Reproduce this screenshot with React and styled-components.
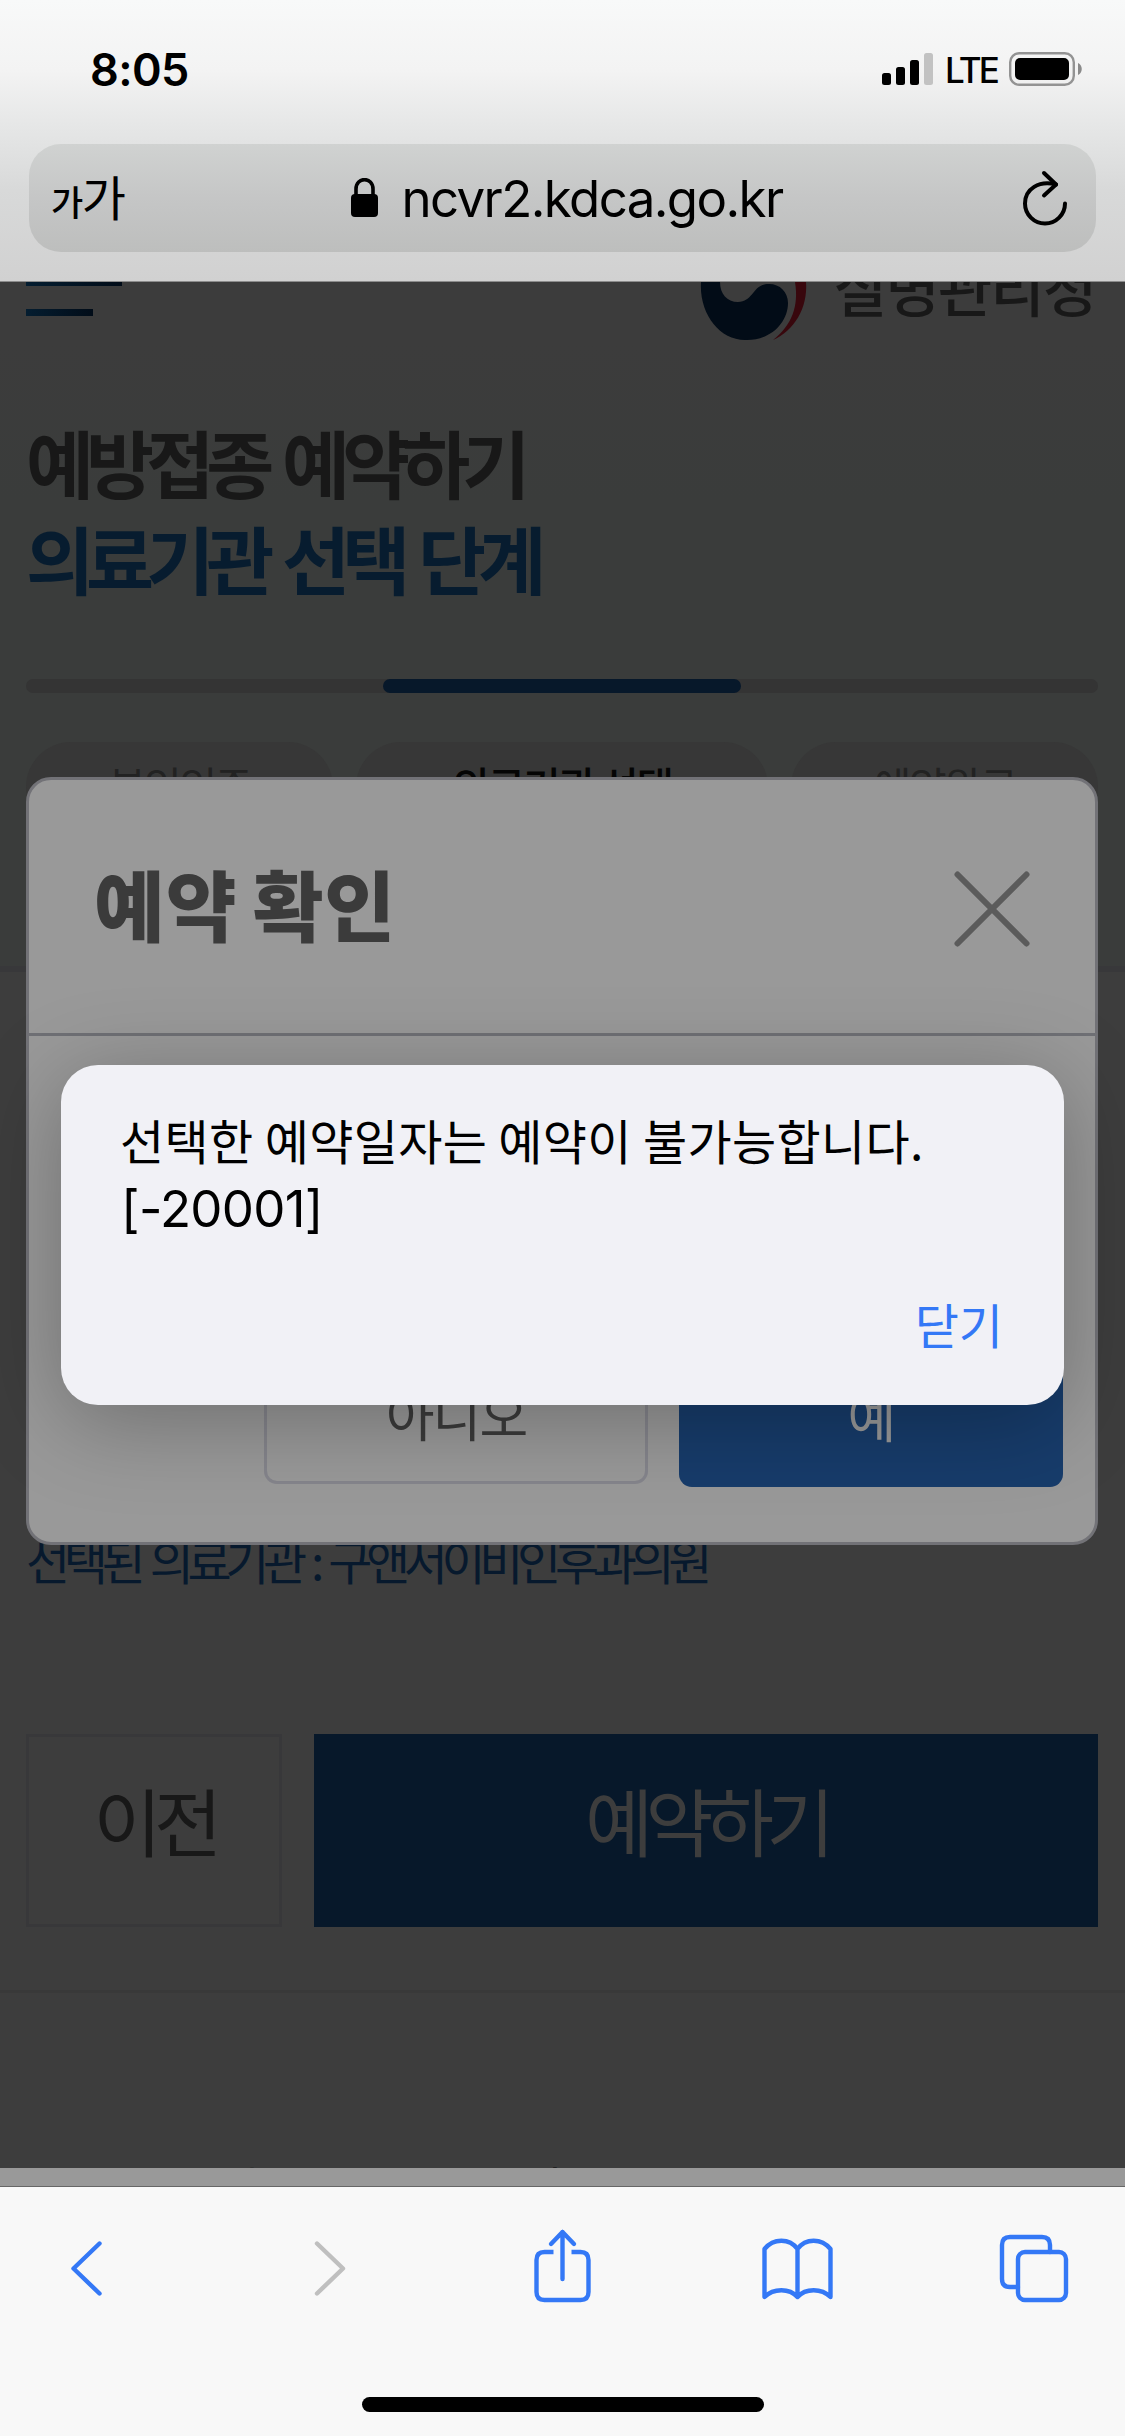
import React from 'react';
import styled, { createGlobalStyle } from 'styled-components';

const GlobalStyle = createGlobalStyle`
  * {
    box-sizing: border-box;
  }

  body {
    margin: 0;
    font-family: Inter, "Noto Sans CJK KR", sans-serif;
    white-space: nowrap;
  }

  button {
    font-family: inherit;
    border: none;
    padding: 0;
    background: none;
  }
`;

const Screen = styled.div`
  display: flex;
  flex-direction: column;
  width: 1125px;
  height: 2436px;
  overflow: hidden;
  background-color: #f8f8f8;
`;

const BrowserHeader = styled.header`
  height: 282px;
  flex-shrink: 0;
  border-bottom: 1px solid #8c8c8c;
  background: linear-gradient(#f8f9f9 0, #f3f3f3 70px, #e6e7e7 125px, #d8d9d9 190px, #d1d1d1 281px);
`;

const StatusBar = styled.div`
  display: flex;
  justify-content: space-between;
  height: 144px;
  padding: 43px 43px 0 90px;
`;

const Time = styled.div`
  font-size: 45px;
  font-weight: 600;
  line-height: 54px;
  letter-spacing: -0.6px;
`;

const StatusIcons = styled.div`
  display: flex;
  align-items: center;
  height: 52px;
`;

const Network = styled.div`
  width: 53px;
  margin: 2px 11px 0 12px;
  font-size: 35px;
  font-weight: 500;
  letter-spacing: -2.8px;
`;

const AddressBar = styled.div`
  display: flex;
  justify-content: space-between;
  align-items: center;
  height: 108px;
  margin: 0 29px;
  padding: 0 28px 0 22px;
  border-radius: 32px;
  background: linear-gradient(#d0d2d1, #c5c6c6 50%, #bdbebd);
`;

const TextSize = styled.div`
  width: 90px;
  font-family: "Noto Sans CJK KR", sans-serif;
  font-size: 48px;
  line-height: 60px;
  letter-spacing: -1.5px;

  small {
    font-size: 35px;
    font-weight: 500;
  }
`;

const Url = styled.div`
  display: flex;
  align-items: center;
  gap: 22px;
  margin-right: 29px;
  font-size: 51px;
  letter-spacing: -1.6px;
`;

const Page = styled.main`
  position: relative;
  height: 1886px;
  flex-shrink: 0;
  overflow: hidden;
  background-color: #3d3d3d;
  color: #181818;
  font-family: "Noto Sans CJK KR", sans-serif;
`;

const Intro = styled.section`
  height: 690px;
  padding: 0 27px 0 26px;
  border-bottom: 6px solid #38383a;
  background: linear-gradient(#3c3c3c 60px, #3a3c3b 220px);
`;

const SiteHeader = styled.div`
  display: flex;
  justify-content: space-between;
  height: 131px;
`;

const Menu = styled.div`
  display: flex;
  flex-direction: column;
  justify-content: space-between;
  height: 34px;
`;

const MenuBar = styled.span`
  width: ${props => props.width}px;
  height: ${props => props.height}px;
  background: linear-gradient(90deg, #041d30, #010c18);
`;

const Brand = styled.div`
  display: flex;
  gap: 23px;
`;

const BrandName = styled.div`
  width: 265px;
  margin-top: -35px;
  font-size: 59px;
  font-weight: 500;
  line-height: 80px;
  letter-spacing: -1.8px;
`;

const Title = styled.h1`
  margin: 0;
  font-size: 74px;
  font-weight: 700;
  line-height: 96px;
  letter-spacing: -8px;
  word-spacing: 7px;

  em {
    display: block;
    color: #071c2f;
    font-style: normal;
  }
`;

const Progress = styled.div`
  display: flex;
  justify-content: center;
  height: 14px;
  margin-top: 74px;
  border-radius: 7px;
  background-color: #343434;
`;

const ProgressValue = styled.div`
  width: 358px;
  border-radius: 7px;
  background-color: #07182a;
`;

const Steps = styled.div`
  display: flex;
  gap: 23px;
  margin-top: 49px;
`;

const Step = styled.div`
  flex: ${props => props.active ? "0 0 412px" : "1"};
  height: 90px;
  border-radius: 45px;
  background-color: #373737;
  color: ${props => props.active ? "#050505" : "#222"};
  font-size: 41px;
  font-weight: ${props => props.active ? 500 : 400};
  line-height: 84px;
  letter-spacing: -2.2px;
  text-align: center;
`;

const Selected = styled.p`
  height: 60px;
  margin: 557px 0 0 26px;
  color: #07192d;
  font-size: 48px;
  line-height: 60px;
  letter-spacing: -6.4px;
  word-spacing: 6px;
`;

const Actions = styled.div`
  display: flex;
  gap: 32px;
  height: 193px;
  margin: 145px 27px 0 26px;
`;

const ActionButton = styled.button`
  flex: ${props => props.primary ? "1" : "0 0 256px"};
  border: ${props => props.primary ? "none" : "3px solid #38383a"};
  padding-bottom: 24px;
  background-color: ${props => props.primary ? "#07182a" : "transparent"};
  color: ${props => props.primary ? "#3d3d3d" : "#181818"};
  font-size: 74px;
  font-weight: 400;
  letter-spacing: -7.6px;
`;

const Footer = styled.footer`
  height: 300px;
  margin-top: 63px;
  padding: 163px 70px 0;
  border-top: 3px solid #393939;
  font-size: 44px;
  line-height: 60px;
  text-align: center;
`;

const Modal = styled.section`
  position: absolute;
  top: 495px;
  left: 26px;
  display: flex;
  flex-direction: column;
  justify-content: space-between;
  width: 1072px;
  height: 768px;
  border: 3px solid #727277;
  border-radius: 25px;
  background-color: #999;
`;

const ModalHeader = styled.div`
  display: flex;
  justify-content: space-between;
  align-items: center;
  height: 256px;
  padding: 0 65px 0 65px;
  border-bottom: 3px solid #6f7075;

  svg {
    margin-top: 4px;
  }
`;

const ModalTitle = styled.h2`
  margin: 0;
  padding-bottom: 8px;
  color: #3b3b3b;
  font-size: 77px;
  font-weight: 900;
  line-height: 90px;
  letter-spacing: 0.8px;
  word-spacing: -3px;
`;

const ModalButtons = styled.div`
  display: flex;
  justify-content: flex-end;
  gap: 31px;
  height: 139px;
  margin: 0 32px 55px 0;
`;

const ModalButton = styled.button`
  width: 384px;
  height: ${props => props.primary ? 139 : 136}px;
  border: ${props => props.primary ? "none" : "3px solid #85858c"};
  border-radius: 13px;
  padding-bottom: 5px;
  background-color: ${props => props.primary ? "#173c6b" : "transparent"};
  color: ${props => props.primary ? "#999" : "#3b3b3b"};
  font-size: 53px;
  font-weight: 400;
  letter-spacing: -2px;
`;

const Alert = styled.div`
  position: absolute;
  top: 783px;
  left: 61px;
  display: flex;
  flex-direction: column;
  justify-content: space-between;
  width: 1003px;
  height: 340px;
  padding: 40px 61px 48px 59px;
  border-radius: 37px;
  background-color: #f1f1f6;
  box-shadow: 0 16px 90px rgba(0, 0, 0, 0.28);
  color: #000;
  font-size: 48px;
  line-height: 69px;
`;

const Message = styled.p`
  margin: 0;
  letter-spacing: 0.35px;

  span {
    display: block;
    padding-left: 1px;
    font-family: Inter, sans-serif;
    font-size: 51px;
    letter-spacing: -0.7px;
  }
`;

const CloseButton = styled.button`
  align-self: flex-end;
  color: #3478f6;
  font-size: 48px;
  line-height: 68px;
`;

const BottomEdge = styled.div`
  height: 19px;
  flex-shrink: 0;
  border-bottom: 1px solid #666;
  background-color: #999;
`;

const Toolbar = styled.nav`
  display: flex;
  justify-content: space-between;
  height: 210px;
  padding: 38px 53px 0 53px;
`;

const HomeIndicator = styled.div`
  align-self: center;
  width: 402px;
  height: 15px;
  border-radius: 8px;
  background-color: #000;
`;

const ToolIcon = ({ offset, color = "#3478f6", children }) => (
  <svg
    width="76"
    height="84"
    viewBox={`${-offset} 0 76 84`}
    fill="none"
    stroke={color}
    strokeWidth="4.4"
    strokeLinecap="round"
    strokeLinejoin="round"
  >
    {children}
  </svg>
);

const SignalIcon = () => (
  <svg width="51" height="32" viewBox="0 0 51 32">
    <rect x="0" y="20" width="9" height="12" rx="2.5" />
    <rect x="14" y="14" width="9" height="18" rx="2.5" />
    <rect x="28" y="7" width="9" height="25" rx="2.5" />
    <rect x="42" y="0" width="9" height="32" rx="2.5" fill="#c2c2c2" />
  </svg>
);

const BatteryIcon = () => (
  <svg width="73" height="34" viewBox="0 0 73 34">
    <rect x="1.2" y="1.2" width="63.6" height="31.6" rx="9" fill="none" stroke="#939393" strokeWidth="2.4" />
    <rect x="6" y="6" width="54" height="22" rx="5" />
    <path d="M69 11 C74 13 74 21 69 23 Z" fill="#8a8a8a" />
  </svg>
);

const LockIcon = () => (
  <svg width="28" height="40" viewBox="0 0 28 40">
    <rect x="0" y="16" width="27" height="23" rx="4" />
    <path d="M5 18 V11 C5 -1.5 22 -1.5 22 11 V18" fill="none" stroke="#000" strokeWidth="3.6" />
  </svg>
);

const ReloadIcon = () => (
  <svg width="46" height="58" viewBox="0 1 46 58" fill="none" stroke="#000" strokeWidth="4" strokeLinecap="round" strokeLinejoin="round">
    <path d="M34 16.500 C17 12 3 21 3 35.500 A20 20 0 0 0 43 35.500" />
    <path d="M22 5 L34 16.500 L22 27.500" />
  </svg>
);

const GovernmentMark = () => (
  <svg width="110" height="64" viewBox="0 0 110 64">
    <path
      d="M1 0 C-1 31 19 58 45 58 C70 59 88 41 88 21 C88 10 80 2 69 2 C52 2 54 20 38 20 C27 20 20 12 20 0 Z"
      fill="#020c17"
    />
    <path d="M95 0 H106 C108 26 94 49 73 58 C92 43 99 24 95 0 Z" fill="#38070d" />
  </svg>
);

const CloseIcon = () => (
  <svg width="76" height="76" viewBox="0 0 76 76" stroke="#5b5b5b" strokeWidth="6" strokeLinecap="round">
    <path d="M3.500 3.500 L72.500 72.500 M72.500 3.500 L3.500 72.500" />
  </svg>
);

const App = () => (
  <>
    <GlobalStyle />
    <Screen>
      <BrowserHeader>
        <StatusBar>
          <Time>8:05</Time>
          <StatusIcons>
            <SignalIcon />
            <Network>LTE</Network>
            <BatteryIcon />
          </StatusIcons>
        </StatusBar>
        <AddressBar>
          <TextSize><small>가</small>가</TextSize>
          <Url>
            <LockIcon />
            ncvr2.kdca.go.kr
          </Url>
          <ReloadIcon />
        </AddressBar>
      </BrowserHeader>
      <Page>
        <Intro>
          <SiteHeader>
            <Menu>
              <MenuBar width={96} height={4} />
              <MenuBar width={67} height={7} />
            </Menu>
            <Brand>
              <GovernmentMark />
              <BrandName>질병관리청</BrandName>
            </Brand>
          </SiteHeader>
          <Title>
            예방접종 예약하기
            <em>의료기관 선택 단계</em>
          </Title>
          <Progress>
            <ProgressValue />
          </Progress>
          <Steps>
            <Step>본인인증</Step>
            <Step active>의료기관 선택</Step>
            <Step>예약완료</Step>
          </Steps>
        </Intro>
        <Selected>선택된 의료기관 : 구앤서이비인후과의원</Selected>
        <Actions>
          <ActionButton>이전</ActionButton>
          <ActionButton primary>예약하기</ActionButton>
        </Actions>
        <Footer>(28159) 충청북도 청주시 흥덕구 오송읍 오송생명2로 187</Footer>
        <Modal>
          <ModalHeader>
            <ModalTitle>예약 확인</ModalTitle>
            <CloseIcon />
          </ModalHeader>
          <ModalButtons>
            <ModalButton>아니오</ModalButton>
            <ModalButton primary>예</ModalButton>
          </ModalButtons>
        </Modal>
        <Alert>
          <Message>
            선택한 예약일자는 예약이 불가능합니다.
            <span>[-20001]</span>
          </Message>
          <CloseButton>닫기</CloseButton>
        </Alert>
      </Page>
      <BottomEdge />
      <Toolbar>
        <ToolIcon offset={12.5}>
          <path d="M34 18.500 L8 43.500 L34 68.500" />
        </ToolIcon>
        <ToolIcon offset={21} color="#bfbfbf">
          <path d="M7 18.500 L33 43.500 L7 68.500" />
        </ToolIcon>
        <ToolIcon offset={7.5}>
          <path d="M21 27 H12 Q4 27 4 35 V67 Q4 75 12 75 H48 Q56 75 56 67 V35 Q56 27 48 27 H39" strokeLinecap="butt" />
          <path d="M30 54 V7 M18.500 19 L30 7 L41.500 19" />
        </ToolIcon>
        <ToolIcon offset={0.5}>
          <path d="M4 72 V24 C13 13 29 13 37 24 C45 13 61 13 70 24 V72 C61 63 45 63 37 72 C29 63 13 63 4 72 Z M37 24 V72" />
        </ToolIcon>
        <ToolIcon offset={3}>
          <rect x="19" y="27" width="48" height="48" rx="7" />
          <path d="M19 62 H11 Q3 62 3 54 V20 Q3 12 11 12 H43 Q51 12 51 20 V27" />
        </ToolIcon>
      </Toolbar>
      <HomeIndicator />
    </Screen>
  </>
);

export default App;
